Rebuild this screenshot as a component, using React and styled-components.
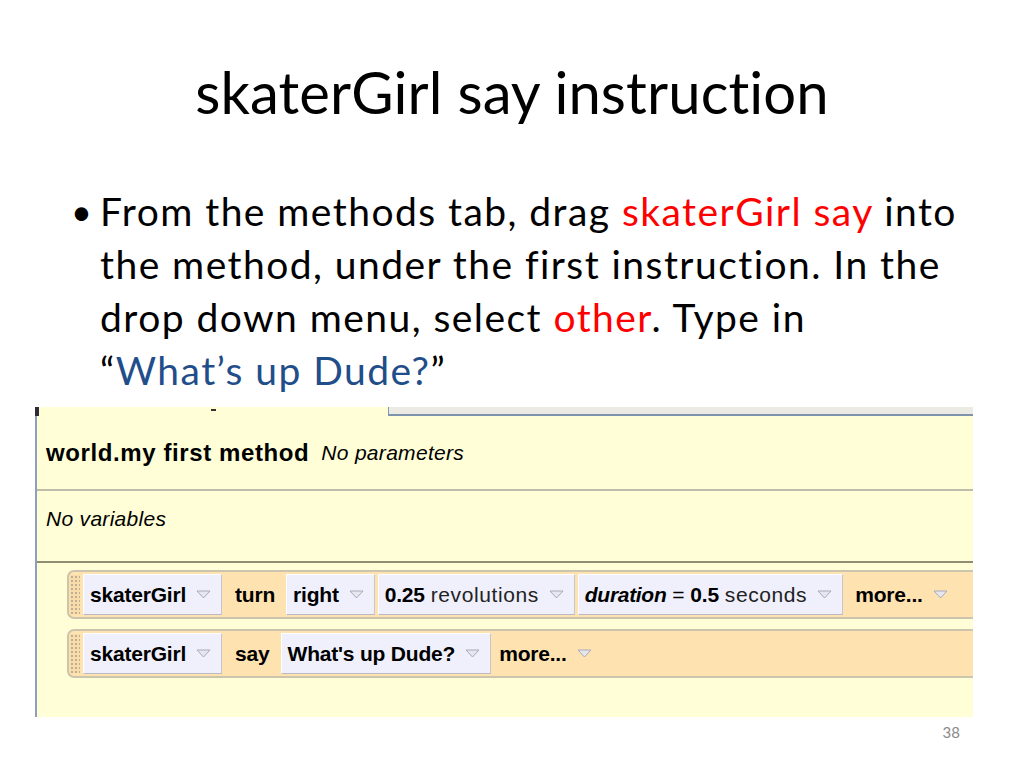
import React from 'react';
import styled, { createGlobalStyle } from 'styled-components';

const GlobalStyle = createGlobalStyle`
  html, body {
    margin: 0;
    padding: 0;
    background: #ffffff;
  }
  body {
    width: 1024px;
    height: 768px;
    overflow: hidden;
  }
`;

// slide
const Slide = styled.div`
  width: 1024px;
  height: 768px;
  display: flex;
  flex-direction: column;
  font-family: Lato, "Open Sans", sans-serif;
  color: #000;
`;

const Title = styled.h1`
  margin: 58px 0 0 0;
  text-align: center;
  font-weight: 400;
  font-size: 58px;
  line-height: 68px;
  letter-spacing: 0.1px;
`;

const Bullets = styled.ul`
  list-style: none;
  margin: 59px 0 0 0;
  padding: 0 0 0 100px;
`;

const Bullet = styled.li`
  position: relative;
  font-size: 39px;
  line-height: 53px;
  letter-spacing: 1.45px;
  &::before {
    content: '•';
    position: absolute;
    left: -29px;
    top: 0;
    font-size: 36px;
  }
`;

const Hi = styled.span`
  color: ${p => p.$c};
`;

// alice method editor
const Panel = styled.div`
  margin: 10px 0 0 35px;
  width: 938px;
  height: 310px;
  display: flex;
  flex-direction: column;
  overflow: hidden;
  font-family: "Liberation Sans", Arial, sans-serif;
`;

const TabStrip = styled.div`
  display: flex;
  height: 9px;
`;

const Tab = styled.div`
  width: 349px;
  background: #fffed6;
  border-left: 4px solid #2c2c3a;
  border-right: 1px solid #8595ad;
  display: flex;
  justify-content: center;
  &::after {
    content: '';
    width: 5px;
    height: 2px;
    margin-top: 2px;
    background: #333;
  }
`;

const TabRest = styled.div`
  flex: 1;
  background: #ebebe3;
  border-bottom: 2px solid #8093ae;
`;

const Body = styled.div`
  flex: 1;
  display: flex;
  flex-direction: column;
  background: #fffed6;
  border-left: 2px solid #8d9fc0;
`;

const InfoRow = styled.div`
  box-sizing: border-box;
  height: ${p => p.$h}px;
  display: flex;
  align-items: center;
  gap: 12px;
  padding: 0 0 ${p => p.$pb ?? 0}px 9px;
  border-bottom: 2px solid ${p => p.$line};
`;

const MethodName = styled.span`
  font-weight: 700;
  font-size: 24px;
  letter-spacing: 0.6px;
`;

const Note = styled.span`
  font-style: italic;
  font-size: 21px;
  letter-spacing: 0.3px;
`;

const Statements = styled.div`
  flex: 1;
  display: flex;
  flex-direction: column;
  gap: 10px;
  padding: 7px 0 0 30px;
`;

const Statement = styled.div`
  box-sizing: border-box;
  width: 960px;
  height: 49px;
  display: flex;
  align-items: center;
  background: #fee3b1;
  border: 2px solid #cdc4ae;
  border-right: none;
  border-radius: 7px 0 0 7px;
`;

const Handle = styled.div`
  align-self: stretch;
  width: 10px;
  margin: 3px 3px 3px 1px;
  background-color: #f8dcaa;
  background-image: radial-gradient(#bfae92 0.8px, transparent 1.2px);
  background-size: 4px 4px;
`;

const Box = styled.div`
  box-sizing: border-box;
  height: 41px;
  display: flex;
  align-items: center;
  gap: 10px;
  padding: 0 10px 0 6px;
  margin-right: ${p => p.$mr ?? 3}px;
  background: #eff0fb;
  border: 1px solid #ffffff;
  border-right-color: #c6c6d2;
  border-bottom-color: #b9b9c6;
  font-size: 21px;
  white-space: nowrap;
`;

const Plain = styled.div`
  display: flex;
  align-items: center;
  gap: 10px;
  padding: 0 ${p => p.$pr ?? 11}px 0 ${p => p.$pl ?? 10}px;
  font-size: 21px;
  white-space: nowrap;
`;

const B = styled.b`
  font-weight: 700;
  letter-spacing: -0.2px;
`;

const Light = styled.span`
  font-weight: 400;
  letter-spacing: 0.6px;
  color: #222;
`;

const Arg = styled.b`
  font-weight: 700;
  font-style: italic;
  letter-spacing: -0.3px;
`;

const Footer = styled.div`
  display: flex;
  justify-content: flex-end;
  padding: 6px 64px 0 0;
  font-family: Lato, "Open Sans", sans-serif;
  font-size: 15px;
  color: #8a8a8a;
`;

const Arrow = () => (
  <svg width="15" height="9" viewBox="0 0 15 9">
    <polygon points="1,1 14,1 7.5,8" fill="#e6e6ee" stroke="#a9a9b8" strokeWidth="1" />
  </svg>
);

export default function App() {
  return (
    <Slide>
      <GlobalStyle />
      <Title>skaterGirl say instruction</Title>
      <Bullets>
        <Bullet>
          From the methods tab, drag <Hi $c="#ff0000">skaterGirl say</Hi> into<br />
          the method, under the first instruction. In the<br />
          drop down menu, select <Hi $c="#ff0000">other</Hi>. Type in<br />
          “<Hi $c="#1f4e8a">What’s up Dude?</Hi>”
        </Bullet>
      </Bullets>

      <Panel>
        <TabStrip>
          <Tab />
          <TabRest />
        </TabStrip>
        <Body>
          <InfoRow $h={75} $line="#bebcaa">
            <MethodName>world.my first method</MethodName>
            <Note>No parameters</Note>
          </InfoRow>
          <InfoRow $h={72} $pb={14} $line="#8f8d72">
            <Note>No variables</Note>
          </InfoRow>
          <Statements>
            <Statement>
              <Handle />
              <Box><B>skaterGirl</B><Arrow /></Box>
              <Plain><B>turn</B></Plain>
              <Box><B>right</B><Arrow /></Box>
              <Box><span><B>0.25</B> <Light>revolutions</Light></span><Arrow /></Box>
              <Box><span><Arg>duration</Arg> = <B>0.5</B> <Light>seconds</Light></span><Arrow /></Box>
              <Plain $pl={9}><B>more...</B><Arrow /></Plain>
            </Statement>
            <Statement>
              <Handle />
              <Box><B>skaterGirl</B><Arrow /></Box>
              <Plain><B>say</B></Plain>
              <Box $mr={6}><B>What's up Dude?</B><Arrow /></Box>
              <Plain $pl={2}><B>more...</B><Arrow /></Plain>
            </Statement>
          </Statements>
        </Body>
      </Panel>
      <Footer>38</Footer>
    </Slide>
  );
}
